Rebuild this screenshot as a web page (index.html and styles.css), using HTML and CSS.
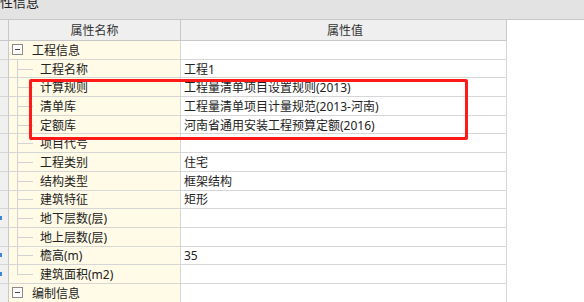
FILE: index.html
```html
<!DOCTYPE html>
<html lang="zh-CN">
<head>
  <meta charset="UTF-8" />
  <title>工程属性</title>
  <link rel="stylesheet" href="styles.css">
</head>
<body>

  <div class="titlebar"><span class="title">属性信息</span></div>

  <div class="sheet">
    <div class="row head">
      <div class="idx"></div>
      <div class="name">属性名称</div>
      <div class="value">属性值</div>
    </div>

    <div class="row">
      <div class="idx"></div>
      <div class="name group"><span class="toggle"></span>工程信息</div>
      <div class="value"></div>
    </div>
    <div class="row">
      <div class="idx"></div>
      <div class="name child">工程名称</div>
      <div class="value">工程1</div>
    </div>
    <div class="row">
      <div class="idx"></div>
      <div class="name child">计算规则</div>
      <div class="value">工程量清单项目设置规则(2013)</div>
    </div>
    <div class="row">
      <div class="idx"></div>
      <div class="name child">清单库</div>
      <div class="value">工程量清单项目计量规范(2013-河南)</div>
    </div>
    <div class="row">
      <div class="idx"></div>
      <div class="name child">定额库</div>
      <div class="value">河南省通用安装工程预算定额(2016)</div>
    </div>
    <div class="row">
      <div class="idx"></div>
      <div class="name child">项目代号</div>
      <div class="value"></div>
    </div>
    <div class="row">
      <div class="idx"></div>
      <div class="name child">工程类别</div>
      <div class="value">住宅</div>
    </div>
    <div class="row">
      <div class="idx"></div>
      <div class="name child">结构类型</div>
      <div class="value">框架结构</div>
    </div>
    <div class="row">
      <div class="idx"></div>
      <div class="name child">建筑特征</div>
      <div class="value">矩形</div>
    </div>
    <div class="row">
      <div class="idx"><span class="mark"></span></div>
      <div class="name child">地下层数(层)</div>
      <div class="value"></div>
    </div>
    <div class="row">
      <div class="idx"></div>
      <div class="name child">地上层数(层)</div>
      <div class="value"></div>
    </div>
    <div class="row">
      <div class="idx"><span class="mark"></span></div>
      <div class="name child">檐高(m)</div>
      <div class="value">35</div>
    </div>
    <div class="row">
      <div class="idx"><span class="mark"></span></div>
      <div class="name child last">建筑面积(m2)</div>
      <div class="value"></div>
    </div>
    <div class="row">
      <div class="idx"></div>
      <div class="name group"><span class="toggle"></span>编制信息</div>
      <div class="value"></div>
    </div>
  </div>

  <!-- annotation box drawn over the grid -->
  <div class="highlight"></div>

</body>
</html>
```

FILE: styles.css
```css
body {
  margin: 0;
  width: 584px;
  height: 302px;
  overflow: hidden;
  background: #fff;
  font-family: "Noto Sans", "Noto Sans CJK SC", sans-serif;
  font-size: 12px;
  color: #222;
  position: relative;
}

.titlebar {
  height: 19px;
  background: #e3e3e3;
  border-bottom: 1px solid #c9c9c9;
  overflow: hidden;
}
.title {
  display: block;
  margin: -7px 0 0 -13px;
  font-size: 13px;
  line-height: 18px;
  color: #222;
}

.sheet {
  width: 507px;
}

.row {
  display: grid;
  grid-template-columns: 9px 172px 326px;
  height: 18.7px;
}
.row > div {
  box-sizing: border-box;
  border-right: 1px solid #d6d6d6;
  border-bottom: 1px solid #d6d6d6;
  display: flex;
  align-items: center;
  white-space: nowrap;
  overflow: hidden;
  position: relative;
}

.row.head {
  height: 21px;
}
.row.head > div {
  background: #efefef;
  border-color: #c8c8c8;
  justify-content: center;
  color: #333;
}

.idx {
  background: #f0f0f0;
  border-right-color: #c8c8c8 !important;
}
.mark {
  width: 2px;
  height: 4px;
  background: #3a86d8;
  margin-left: 0;
}

.name {
  background: #fffbe6;
}
.name.group {
  padding-left: 3px;
}
.name.child {
  padding-left: 31px;
}
.value {
  padding-left: 3px;
}

.toggle {
  width: 9px;
  height: 9px;
  border: 1px solid #8a8a8a;
  background: #fff;
  margin-right: 9px;
  position: relative;
}
.toggle::after {
  content: "";
  position: absolute;
  left: 2px;
  right: 2px;
  top: 4px;
  height: 1px;
  background: #444;
}

/* tree connector lines */
.name.child::before {
  content: "";
  position: absolute;
  left: 8px;
  top: 0;
  bottom: -1px;
  border-left: 1px solid #d2d2d2;
}
.name.child.last::before {
  bottom: 50%;
}
.name.child::after {
  content: "";
  position: absolute;
  left: 8px;
  width: 16px;
  top: 50%;
  border-top: 1px solid #d2d2d2;
}

.highlight {
  position: absolute;
  left: 29px;
  top: 79px;
  width: 439px;
  height: 61px;
  box-sizing: border-box;
  border: 3px solid #ff1a1a;
  border-radius: 2px;
}
```
